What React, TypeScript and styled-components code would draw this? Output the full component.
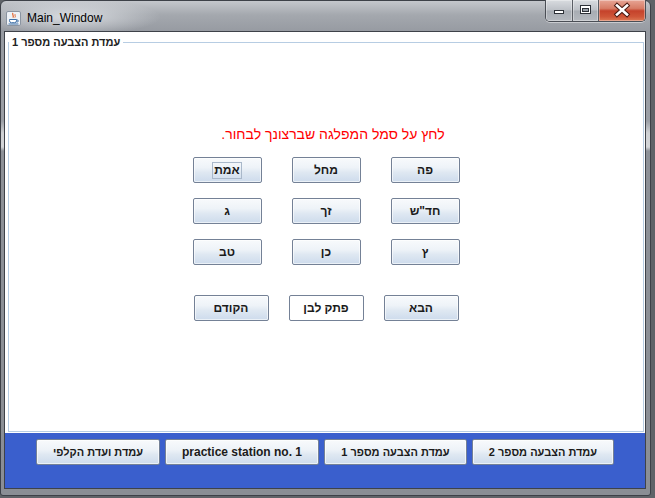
import React from 'react';
import styled, { createGlobalStyle } from 'styled-components';

const GlobalStyle = createGlobalStyle`
  html, body {
    margin: 0;
    padding: 0;
    background: #5f6368;
    overflow: hidden;
  }
  body {
    width: 655px;
    height: 498px;
  }
`;

const Window = styled.div`
  box-sizing: border-box;
  width: 651px;
  height: 496px;
  border: 1px solid #3d4148;
  border-radius: 6px 6px 3px 3px;
  padding: 0 4px 6px 3px;
  display: flex;
  flex-direction: column;
  background:
    radial-gradient(ellipse 90px 18px at 70px 16px, rgba(235, 238, 242, 0.75), rgba(235, 238, 242, 0) 100%),
    linear-gradient(180deg, #c4c7cc 0px, #a4a8ae 14px, #969aa1 31px, #9b9fa6 120px, #cfd1d4 132px, #d3d5d8 146px, #8d9198 150px, #8a8e95 100%);
`;

const TitleBar = styled.div`
  height: 30px;
  display: flex;
  align-items: flex-start;
  flex-shrink: 0;
`;

const AppIcon = styled.svg`
  margin: 10px 0 0 2px;
  flex-shrink: 0;
`;

const Title = styled.div`
  margin: 9px 0 0 6px;
  font: 12px/16px 'Liberation Sans', Arial, sans-serif;
  color: #000;
`;

const Controls = styled.div`
  margin-left: auto;
  margin-top: -1px;
  display: flex;
  height: 21px;
  border: 1px solid #4a4e55;
  border-top: none;
  border-radius: 0 0 5px 5px;
  overflow: hidden;
  box-shadow: 0 1px 0 rgba(255, 255, 255, 0.45);
`;

const CtrlButton = styled.div<{ $w: number; $close?: boolean }>`
  width: ${p => p.$w}px;
  height: 21px;
  display: flex;
  align-items: center;
  justify-content: center;
  box-shadow: inset 0 0 0 1px rgba(255, 255, 255, 0.35);
  & + & {
    border-left: 1px solid #5a5e65;
  }
  background: ${p =>
    p.$close
      ? 'linear-gradient(180deg, #e7a595 0%, #d77c66 40%, #c5422b 52%, #cf5638 80%, #dd7a55 100%)'
      : 'linear-gradient(180deg, #d9dce0 0%, #bcc0c6 48%, #a7acb3 52%, #b5b9bf 100%)'};
`;

const Client = styled.div`
  flex: 1;
  display: flex;
  flex-direction: column;
  border: 1px solid #3e4249;
  background: #fff;
`;

const MainPanel = styled.div`
  flex: 1;
  display: flex;
  padding: 3px 1px 1px 3px;
  background: #fff;
`;

const Frame = styled.fieldset`
  flex: 1;
  min-width: 0;
  margin: 0;
  padding: 0;
  border: 1px solid #b7cde3;
`;

const Legend = styled.legend`
  padding: 0 3px;
  margin: 0;
  font: bold 11px/14px 'Liberation Sans', Arial, sans-serif;
  color: #222;
`;

const Content = styled.div`
  display: flex;
  flex-direction: column;
  align-items: center;
  padding-top: 75px;
`;

const Instruction = styled.div`
  font: 14px/20px 'Liberation Sans', Arial, sans-serif;
  color: #ff0000;
  margin-bottom: 13px;
  padding-left: 14px;
`;

const PartyGrid = styled.div`
  display: grid;
  grid-template-columns: repeat(3, 69px);
  grid-auto-rows: 26px;
  gap: 15px 30px;
`;

const NavRow = styled.div`
  display: flex;
  gap: 20px;
  margin-top: 30px;
`;

const Button = styled.button<{ $w?: number; $plain?: boolean }>`
  box-sizing: border-box;
  width: ${p => (p.$w ? `${p.$w}px` : '100%')};
  height: 26px;
  padding: 0;
  display: flex;
  align-items: center;
  justify-content: center;
  border: 1px solid #748196;
  border-radius: 2px;
  font: bold 12px/14px 'Liberation Sans', Arial, sans-serif;
  color: #1b1b1b;
  cursor: default;
  background: ${p =>
    p.$plain
      ? '#fff'
      : 'linear-gradient(180deg, #f8fafc 0%, #eef3f8 40%, #dfe8f2 60%, #cddbec 100%)'};
  box-shadow: ${p => (p.$plain ? 'none' : 'inset 0 0 0 1px rgba(255, 255, 255, 0.6)')};
`;

const Label = styled.span<{ $focus?: boolean; $small?: boolean }>`
  padding: 0 1px 1px;
  font-size: ${p => (p.$small ? '11px' : '12px')};
  border: 1px solid ${p => (p.$focus ? '#a9b8ca' : 'transparent')};
`;

const BottomPanel = styled.div`
  height: 55px;
  flex-shrink: 0;
  box-sizing: border-box;
  padding-top: 6px;
  display: flex;
  justify-content: center;
  align-items: flex-start;
  gap: 5px;
  background: #3a5fcd;
`;

const parties = ['אמת', 'מחל', 'פה', 'ג', 'זך', 'חד"ש', 'טב', 'כן', 'ץ'];

const stations = [
  { label: 'עמדת ועדת הקלפי', w: 124, he: true },
  { label: 'practice station no. 1', w: 154, he: false },
  { label: 'עמדת הצבעה מספר 1', w: 143, he: true },
  { label: 'עמדת הצבעה מספר 2', w: 142, he: true },
];

function JavaIcon() {
  return (
    <AppIcon width="15" height="15" viewBox="0 0 15 15">
      <rect x="0.5" y="0.5" width="14" height="14" rx="1.5" fill="#eef2f7" stroke="#8a94a1" />
      <path d="M7 2 C5.6 3.6 8.4 4.5 6.9 6.6" stroke="#e2622b" fill="none" strokeWidth="1.2" />
      <path d="M9.2 3.2 C8.2 4.2 10.1 5 8.9 6.6" stroke="#e2622b" fill="none" strokeWidth="1" />
      <path d="M3.5 8.5 h7 v1.2 a2 2 0 0 1 -2 2 h-3 a2 2 0 0 1 -2 -2 z" fill="#fff" stroke="#3b6ea6" />
      <path d="M10.5 9 h0.8 a1 1 0 0 1 0 2 h-0.8" stroke="#3b6ea6" fill="none" />
      <path d="M2.5 13 h10" stroke="#3b6ea6" />
    </AppIcon>
  );
}

function WindowControls() {
  return (
    <Controls>
      <CtrlButton $w={26}>
        <svg width="26" height="21" viewBox="0 0 26 21">
          <rect x="8.5" y="10.5" width="9" height="3" fill="#fff" stroke="#2c3037" />
        </svg>
      </CtrlButton>
      <CtrlButton $w={25}>
        <svg width="25" height="21" viewBox="0 0 25 21">
          <rect x="7.5" y="5.5" width="10" height="8" fill="#fff" stroke="#2c3037" />
          <rect x="9.5" y="8.5" width="6" height="3" fill="#9aa0a8" stroke="#2c3037" />
        </svg>
      </CtrlButton>
      <CtrlButton $w={46} $close>
        <svg width="46" height="21" viewBox="0 0 46 21">
          <path d="M18 5.5 L28 14.5 M28 5.5 L18 14.5" stroke="#4a1a12" strokeWidth="4.6" strokeLinecap="square" />
          <path d="M18 5.5 L28 14.5 M28 5.5 L18 14.5" stroke="#fff" strokeWidth="2.6" strokeLinecap="square" />
        </svg>
      </CtrlButton>
    </Controls>
  );
}

export default function App() {
  return (
    <>
      <GlobalStyle />
      <Window>
        <TitleBar>
          <JavaIcon />
          <Title>Main_Window</Title>
          <WindowControls />
        </TitleBar>
        <Client>
          <MainPanel>
            <Frame>
              <Legend>
                <span dir="auto">עמדת הצבעה מספר 1</span>
              </Legend>
              <Content>
                <Instruction dir="auto">לחץ על סמל המפלגה שברצונך לבחור.</Instruction>
                <PartyGrid>
                  {parties.map((name, i) => (
                    <Button key={name}>
                      <Label dir="auto" $focus={i === 0}>
                        {name}
                      </Label>
                    </Button>
                  ))}
                </PartyGrid>
                <NavRow>
                  <Button $w={75}>
                    <Label dir="auto">הקודם</Label>
                  </Button>
                  <Button $w={75} $plain>
                    <Label dir="auto">פתק לבן</Label>
                  </Button>
                  <Button $w={75}>
                    <Label dir="auto">הבא</Label>
                  </Button>
                </NavRow>
              </Content>
            </Frame>
          </MainPanel>
          <BottomPanel>
            {stations.map(s => (
              <Button key={s.label} $w={s.w}>
                <Label dir="auto" $small={s.he}>
                  {s.label}
                </Label>
              </Button>
            ))}
          </BottomPanel>
        </Client>
      </Window>
    </>
  );
}
